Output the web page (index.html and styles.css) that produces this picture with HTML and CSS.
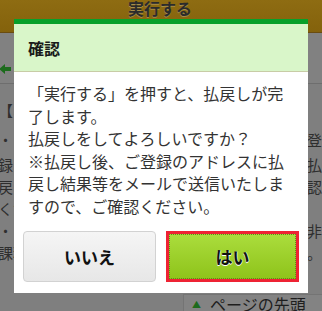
FILE: index.html
```html
<!DOCTYPE html>
<html lang="ja">
<head>
<meta charset="utf-8">
<link rel="stylesheet" href="styles.css">
</head>
<body>
<div class="page">
  <div class="topbar"><span class="topbar-title">実行する</span></div>
  <div class="navbar">
    <svg class="back" width="12" height="12" viewBox="0 0 12 12"><path d="M0 6 L6 1 L6 4 L12 4 L12 8 L6 8 L6 11 Z" fill="#1d6b1d"/></svg>
  </div>
  <div class="content">
    <div class="row r1"><span class="lt">【ネット払戻しについて】</span><span class="rt"></span></div>
    <div class="row r2"><span class="lt">・ 払戻し完了後、ご登録いただいた</span><span class="rt">登</span></div>
    <div class="row r3"><span class="lt">録したメールアドレスに</span><span class="rt">払</span></div>
    <div class="row r4"><span class="lt">戻し結果をお送りしますので</span><span class="rt">認</span></div>
    <div class="row r5"><span class="lt">くださいますようお願いします。</span><span class="rt"></span></div>
    <div class="row r6"><span class="lt">・ 非課税の払戻金については</span><span class="rt">非</span></div>
    <div class="row r7"><span class="lt">課税となります</span><span class="rt">。</span></div>
  </div>
  <div class="pagetop"><span class="tri">▲</span><span>ページの先頭</span></div>
</div>

<div class="modal">
  <div class="modal-head">確認</div>
  <div class="modal-body">「実行する」を押すと、払戻しが完了します。<br>払戻しをしてよろしいですか？<br>※払戻し後、ご登録のアドレスに払戻し結果等をメールで送信いたしますので、ご確認ください。</div>
  <div class="modal-actions">
    <button class="btn btn-no">いいえ</button>
    <button class="btn btn-yes">はい</button>
  </div>
</div>
</body>
</html>
```

FILE: styles.css
```css
html, body {
  margin: 0;
  padding: 0;
}
body {
  width: 322px;
  height: 311px;
  overflow: hidden;
  background: #7f7f7f;
  font-family: "Noto Sans CJK JP", "Noto Sans", sans-serif;
  position: relative;
}
.page {
  display: flex;
  flex-direction: column;
  height: 311px;
}
.topbar {
  height: 32px;
  background: linear-gradient(#8e6c12, #84620c);
  border-bottom: 1px solid #6a4c10;
  display: flex;
  justify-content: center;
  align-items: flex-start;
}
.topbar-title {
  font-size: 16px;
  font-weight: bold;
  line-height: 16px;
  margin-left: -2px;
  color: #2b2b2b;
  text-shadow: 0 1px 0 rgba(255,255,255,0.25);
}
.navbar {
  height: 51px;
  border-bottom: 1px solid #6e6e6e;
  display: flex;
  align-items: flex-start;
  padding-top: 30px;
  box-sizing: border-box;
  background: #818181;
}
.back {
  margin-left: -1px;
}
.content {
  display: flex;
  flex-direction: column;
  padding-top: 16px;
  font-size: 15px;
  color: #2e2e2e;
}
.row {
  display: flex;
  height: 22px;
  line-height: 22px;
  white-space: nowrap;
}
.lt {
  flex: 1;
  min-width: 0;
  overflow: hidden;
  margin-left: -2px;
}
.rt {
  width: 15px;
  flex: none;
}
.r2 { margin-top: 7px; }
.r3 { margin-top: 3px; }
.pagetop {
  margin-top: auto;
  margin-left: 183px;
  height: 16px;
  border-top: 1px solid #747474;
  border-left: 1px solid #747474;
  display: flex;
  align-items: flex-start;
  gap: 9px;
  padding-left: 8px;
  font-size: 16px;
  line-height: 18px;
  color: #1e1e1e;
  background: #838383;
}
.tri {
  font-size: 9px;
  color: #1d6b1d;
  line-height: 18px;
  margin-top: 1px;
}
.modal {
  position: absolute;
  top: 19px;
  left: 14px;
  width: 294px;
  background: #fff;
  border-top: 5px solid #08a02a;
  display: flex;
  flex-direction: column;
}
.modal-head {
  height: 48px;
  background: #d9f6c9;
  border-bottom: 1px solid #c8cca6;
  box-sizing: border-box;
  display: flex;
  align-items: center;
  padding-left: 14px;
  font-size: 16px;
  font-weight: bold;
  color: #1a1a1a;
}
.modal-body {
  padding: 10px 14px 0 14px;
  font-size: 16px;
  line-height: 22.5px;
  color: #333;
}
.modal-actions {
  display: grid;
  grid-template-columns: 1fr 1fr;
  gap: 10px;
  padding: 14px 9px 11px 9px;
}
.btn {
  height: 51px;
  font-family: "Noto Sans CJK JP", "Noto Sans", sans-serif;
  font-size: 17px;
  font-weight: bold;
  color: #111;
  margin: 0;
  padding: 0;
  box-sizing: border-box;
}
.btn-no {
  border: 1px solid #d2d2d2;
  border-radius: 4px;
  background: linear-gradient(#f5f5f5, #e7e7e7);
}
.btn-yes {
  border: 3px solid #ee2334;
  border-radius: 0;
  background: linear-gradient(#abdd3d, #8ec31a);
  outline: 1px dotted #5f8a1a;
  outline-offset: -4px;
  text-shadow: 0 1px 0 #fff, 1px 0 0 rgba(255,255,255,0.6);
}
```
